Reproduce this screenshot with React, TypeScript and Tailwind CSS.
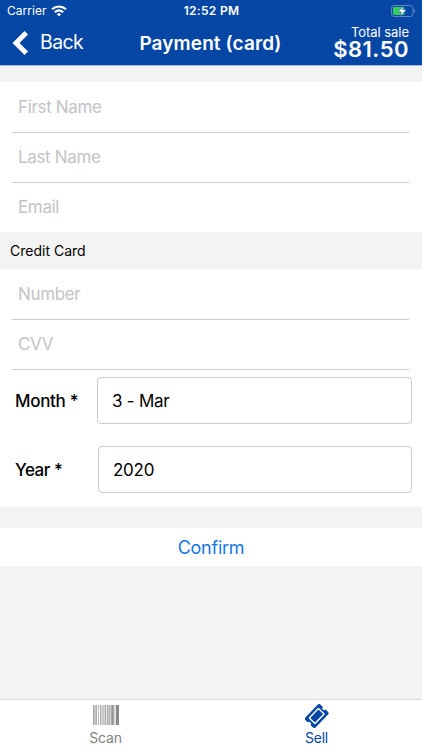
function Field({ label, last = false }: { label: string; last?: boolean }) {
  return (
    <div className={`mr-[13px] ml-[12px] flex h-[50px] items-center border-b pr-1 pl-[6px] text-[17px] tracking-[-0.35px] text-[#c3c3c6] ${last ? "border-transparent" : "border-[#cbcbcd]"}`}>
      <span>{label}</span>
    </div>
  );
}

function StatusBar() {
  return (
    <div className="grid h-[22px] grid-cols-[1fr_auto_1fr] items-center pr-[6px] pl-[7px]">
      <div className="flex items-center gap-[4px]">
        <span className="text-[12px] leading-none tracking-[0.05px]">Carrier</span>
        <svg width="16" height="12" viewBox="0 0 16 12" fill="none" stroke="white" strokeWidth="2.1">
          <path d="M1 4.3C5 .5 11 .5 15 4.3" />
          <path d="M3.8 7.2C6.3 5 9.7 5 12.2 7.2" />
          <path d="M5.8 9.1C7.2 8 8.8 8 10.2 9.1L8 11.5Z" fill="white" stroke="none" />
        </svg>
      </div>
      <span className="text-[12px] leading-none font-semibold tracking-[0.3px]">12:52 PM</span>
      <svg className="justify-self-end" width="25" height="12" viewBox="0 0 25 12">
        <rect x=".5" y=".5" width="21.5" height="11" rx="2.7" fill="none" stroke="#6288c6" />
        <path d="M23.3 4v4c1.2-.6 1.2-3.4 0-4Z" fill="#7c9bd0" />
        <rect x="2" y="2" width="11.5" height="8" rx="1" fill="#34d15c" />
        <path d="M12.9.6 6.8 6.9h3.4L9 11.4l6.6-6.7h-3.9Z" fill="white" stroke="#0647a6" strokeWidth=".6" />
      </svg>
    </div>
  );
}

const bars = [
  [0, 1.7, 0.75], [2.3, 1.7, 0.7], [5.2, 0.8, 0.7], [7.2, 1.2, 0.85], [9.2, 2.1, 0.5], [11.7, 1.5, 0.75],
  [14.1, 1.4, 0.8], [16.2, 1.2, 0.85], [18.2, 2.6, 0.9], [21.5, 0.9, 0.6], [23, 3, 1],
];

export default function App() {
  return (
    <div className="flex h-[750px] w-[422px] flex-col overflow-hidden bg-[#f3f3f3] font-['Inter','Liberation_Sans',sans-serif] text-black">
      <header className="h-[66px] border-b border-[#a9bee1] bg-[#0647a6] text-white">
        <StatusBar />
        <div className="grid h-[43px] grid-cols-[1fr_auto_1fr] items-center pr-[13px] pl-[12px]">
          <div className="-mt-[2px] flex items-center gap-[11px]">
            <svg width="17" height="26" viewBox="0 0 17 26"><path d="M14.3 2.7 4 12.9l10.3 10.4" fill="none" stroke="white" strokeWidth="5" /></svg>
            <span className="text-[19.5px] leading-none tracking-[-0.6px]">Back</span>
          </div>
          <h1 className="text-[19px] leading-none font-semibold tracking-[0.1px]">Payment (card)</h1>
          <div className="flex flex-col items-end pb-[6px]">
            <span className="text-[13px] leading-[17px] tracking-[-0.05px]">Total sale</span>
            <span className="text-[22px] leading-[17px] font-semibold tracking-[0.5px] whitespace-nowrap">$81.50</span>
          </div>
        </div>
      </header>
      <section className="mt-4 h-[150px] bg-white pt-[1px]">
        <Field label="First Name" />
        <Field label="Last Name" />
        <Field label="Email" last />
      </section>
      <h2 className="flex h-[37px] items-center pl-[10px] text-[14px]">Credit Card</h2>
      <section className="h-[238px] bg-white pt-px">
        <Field label="Number" />
        <Field label="CVV" />
        <div className="mt-[7px] flex h-[47px] items-center pr-[10px] pl-[15px] text-[17px]">
          <span className="w-[82px] pt-[2px] font-medium tracking-[-0.3px]">Month *</span>
          <div className="flex h-full flex-1 items-center rounded-[4px] border border-[#cbcbcd] pt-[2px] pl-[14px] tracking-[-0.25px]">3 - Mar</div>
        </div>
        <div className="mt-[22px] flex h-[47px] items-center pr-[10px] pl-[15px] text-[17px]">
          <span className="w-[83px] pt-[2px] font-medium tracking-[-0.45px]">Year *</span>
          <div className="flex h-full flex-1 items-center rounded-[4px] border border-[#cbcbcd] pt-[2px] pl-[14px] tracking-[-0.25px]">2020</div>
        </div>
      </section>
      <button className="mt-[21px] h-[38px] bg-white text-[18px] tracking-[-0.25px] text-[#1478e8]">Confirm</button>
      <nav className="mt-auto grid h-[51px] grid-cols-2 border-t border-[#d9d9d9] bg-white text-[14px]">
        <div className="flex flex-col items-center pt-[5px] text-[#828282]">
          <svg width="26" height="20" viewBox="0 0 26 20">
            {bars.map(([x, w, o]) => <rect key={x} x={x} y="0" width={w} height="20" fill="#8a8a8a" opacity={o} />)}
          </svg>
          <span className="mt-[4px] leading-[18px] tracking-[-0.15px]">Scan</span>
        </div>
        <div className="flex flex-col items-center pt-[4px] text-[#0647a6]">
          <svg width="24" height="24" viewBox="0 0 24 24">
            <g transform="translate(11.7 12) rotate(-46)">
              <path d="M-9-7.1H9Q10.8-7.1 10.8-5.3V-1.8A1.8 1.8 0 0 0 10.8 1.8V5.3Q10.8 7.1 9 7.1H-9Q-10.8 7.1-10.8 5.3V1.8A1.8 1.8 0 0 0-10.8-1.8V-5.3Q-10.8-7.1-9-7.1Z" fill="currentColor" />
              <rect x="-6.6" y="-4" width="13.2" height="8" rx=".4" fill="none" stroke="white" strokeWidth="1.4" />
            </g>
          </svg>
          <span className="mt-px leading-[18px] tracking-[-0.2px]">Sell</span>
        </div>
      </nav>
    </div>
  );
}
